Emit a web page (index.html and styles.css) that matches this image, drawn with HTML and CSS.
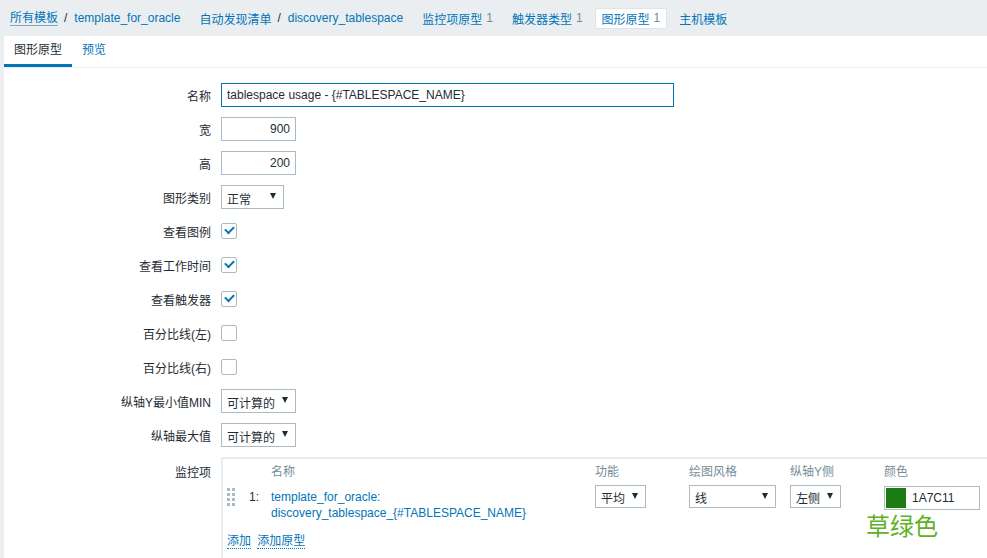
FILE: index.html
```html
<!DOCTYPE html>
<html lang="zh-cn">
<head>
    <meta charset="UTF-8">
    <title>图形原型</title>
    <link rel="stylesheet" href="styles.css">
</head>
<body>
    <nav class="breadcrumbs">
        <span class="crumb"><a class="first">所有模板</a><span class="sep">/</span><a>template_for_oracle</a></span>
        <span class="crumb"><a>自动发现清单</a><span class="sep">/</span><a>discovery_tablespace</a></span>
        <span class="crumb"><a>监控项原型</a><span class="count">1</span></span>
        <span class="crumb"><a>触发器类型</a><span class="count">1</span></span>
        <span class="crumb selected"><a>图形原型</a><span class="count">1</span></span>
        <span class="crumb"><a>主机模板</a></span>
    </nav>

    <div class="panel">
        <ul class="tabs">
            <li class="active">图形原型</li>
            <li>预览</li>
        </ul>

        <form class="form-list">
            <div class="row">
                <label>名称</label>
                <input class="text wide focused" type="text" value="tablespace usage - {#TABLESPACE_NAME}">
            </div>
            <div class="row">
                <label>宽</label>
                <input class="text num" type="text" value="900">
            </div>
            <div class="row">
                <label>高</label>
                <input class="text num" type="text" value="200">
            </div>
            <div class="row">
                <label>图形类别</label>
                <div class="select w63"><span>正常</span><i class="arrow"></i></div>
            </div>
            <div class="row">
                <label>查看图例</label>
                <span class="checkbox checked"></span>
            </div>
            <div class="row">
                <label>查看工作时间</label>
                <span class="checkbox checked"></span>
            </div>
            <div class="row">
                <label>查看触发器</label>
                <span class="checkbox checked"></span>
            </div>
            <div class="row">
                <label>百分比线(左)</label>
                <span class="checkbox"></span>
            </div>
            <div class="row">
                <label>百分比线(右)</label>
                <span class="checkbox"></span>
            </div>
            <div class="row">
                <label>纵轴Y最小值MIN</label>
                <div class="select w75"><span>可计算的</span><i class="arrow"></i></div>
            </div>
            <div class="row">
                <label>纵轴最大值</label>
                <div class="select w75"><span>可计算的</span><i class="arrow"></i></div>
            </div>
            <div class="row items-row">
                <label>监控项</label>
                <div class="items">
                    <div class="items-grid head">
                        <span></span>
                        <span></span>
                        <span>名称</span>
                        <span>功能</span>
                        <span>绘图风格</span>
                        <span>纵轴Y侧</span>
                        <span>颜色</span>
                    </div>
                    <div class="items-grid item">
                        <span class="drag">
                            <i></i><i></i><i></i><i></i><i></i><i></i><i></i><i></i>
                        </span>
                        <span class="num-col">1:</span>
                        <span class="item-name">template_for_oracle:<br>discovery_tablespace_{#TABLESPACE_NAME}</span>
                        <span><div class="select w50"><span>平均</span><i class="arrow"></i></div></span>
                        <span><div class="select w86"><span>线</span><i class="arrow"></i></div></span>
                        <span><div class="select w50"><span>左侧</span><i class="arrow"></i></div></span>
                        <span class="color-cell">
                            <span class="color-input"><i class="swatch"></i>1A7C11</span>
                            <span class="note">草绿色</span>
                        </span>
                    </div>
                    <div class="add-links">
                        <a>添加</a>
                        <a>添加原型</a>
                    </div>
                </div>
            </div>
        </form>
    </div>
</body>
</html>
```

FILE: styles.css
```css
body, html {
    margin: 0;
    padding: 0;
    height: 100%;
    overflow: hidden;
}
body {
    background-color: #ebeef0;
    font-family: 'Liberation Sans', Arial, 'Noto Sans CJK SC', sans-serif;
    font-size: 12px;
    color: #1f2c33;
}
a {
    color: #0275b8;
    cursor: pointer;
}
.breadcrumbs {
    display: flex;
    align-items: center;
    height: 36px;
    padding-left: 3px;
    box-sizing: border-box;
}
.crumb {
    display: flex;
    align-items: center;
    height: 21px;
    padding: 0 7px;
    margin-right: 5px;
    box-sizing: border-box;
    white-space: nowrap;
}
.crumb .first {
    border-bottom: 1px solid #7fa9c4;
    line-height: 14px;
}
.sep {
    color: #1f2c33;
    padding: 0 7px 0 6px;
}
.count {
    color: #768d99;
    margin-left: 4px;
}
.crumb.selected {
    background-color: #ffffff;
    border: 1px solid #dfe4e7;
    border-radius: 2px;
    padding: 0 6px;
}
.panel {
    background-color: #ffffff;
    margin-left: 4px;
    height: calc(100% - 36px);
}
.tabs {
    display: flex;
    margin: 0;
    padding: 0;
    list-style: none;
    border-bottom: 1px solid #ebeef0;
    height: 31px;
}
.tabs li {
    padding: 0 10px;
    line-height: 29px;
    color: #0275b8;
}
.tabs li.active {
    color: #1f2c33;
    border-bottom: 3px solid #0275b8;
    line-height: 28px;
}
.form-list {
    padding-top: 15px;
}
.row {
    display: flex;
    align-items: center;
    min-height: 24px;
    margin-bottom: 10px;
}
.row label {
    width: 217px;
    padding-right: 10px;
    text-align: right;
    box-sizing: border-box;
}
.text {
    height: 24px;
    box-sizing: border-box;
    border: 1px solid #acbbc2;
    padding: 0 5px;
    font-family: inherit;
    font-size: 12px;
    color: #1f2c33;
}
.text.wide {
    width: 453px;
}
.text.focused {
    border-color: #0275b8;
}
.text.num {
    width: 75px;
    text-align: right;
}
.select {
    display: flex;
    align-items: center;
    justify-content: space-between;
    height: 24px;
    box-sizing: border-box;
    border: 1px solid #acbbc2;
    padding: 0 7px 0 5px;
    background-color: #ffffff;
}
.select span {
    padding-top: 2px;
}
.w50 { width: 51px; }
.w63 { width: 63px; }
.w75 { width: 75px; }
.w86 { width: 87px; }
.arrow {
    width: 0;
    height: 0;
    border-left: 3px solid transparent;
    border-right: 3px solid transparent;
    border-top: 6px solid #1f2c33;
    margin-top: -2px;
}
.checkbox {
    display: block;
    width: 16px;
    height: 16px;
    box-sizing: border-box;
    border: 1px solid #acbbc2;
    border-radius: 2px;
    position: relative;
}
.checkbox.checked::after {
    content: '';
    position: absolute;
    left: 3px;
    top: 2px;
    width: 7px;
    height: 4px;
    border-left: 2px solid #0275b8;
    border-bottom: 2px solid #0275b8;
    transform: rotate(-45deg);
}
.items-row {
    align-items: flex-start;
}
.items-row label {
    padding-top: 6px;
}
.items {
    flex-grow: 1;
    border-top: 2px solid #ebeef0;
    border-left: 2px solid #ebeef0;
    padding-left: 3px;
    height: 100px;
}
.items-grid {
    display: grid;
    grid-template-columns: 23px 22px 324px 94px 101px 94px auto;
}
.items-grid.head {
    color: #768d99;
    padding-top: 3px;
    height: 23px;
    box-sizing: border-box;
}
.item {
    padding-top: 3px;
}
.drag {
    display: grid;
    grid-template-columns: 3px 3px;
    grid-auto-rows: 3px;
    gap: 2px 2px;
    padding: 3px 0 0 1px;
}
.drag i {
    background-color: #acbbc2;
}
.num-col {
    padding-top: 5px;
}
.item-name {
    color: #0275b8;
    line-height: 16px;
    padding-top: 4px;
}
.item .select {
    height: 23px;
}
.color-cell {
    position: relative;
}
.color-input {
    display: flex;
    align-items: center;
    width: 96px;
    height: 24px;
    margin-top: 1px;
    box-sizing: border-box;
    border: 1px solid #acbbc2;
    padding-left: 1px;
}
.swatch {
    width: 20px;
    height: 20px;
    margin-right: 6px;
    background-color: #1a7c11;
}
.note {
    position: absolute;
    left: -18px;
    top: 26px;
    font-size: 24px;
    color: #5fb11f;
    font-family: 'Noto Sans CJK SC', sans-serif;
    line-height: 28px;
    white-space: nowrap;
}
.add-links {
    padding: 10px 0 0 1px;
}
.add-links a {
    border-bottom: 1px dotted #0275b8;
    margin-right: 3px;
}
```
